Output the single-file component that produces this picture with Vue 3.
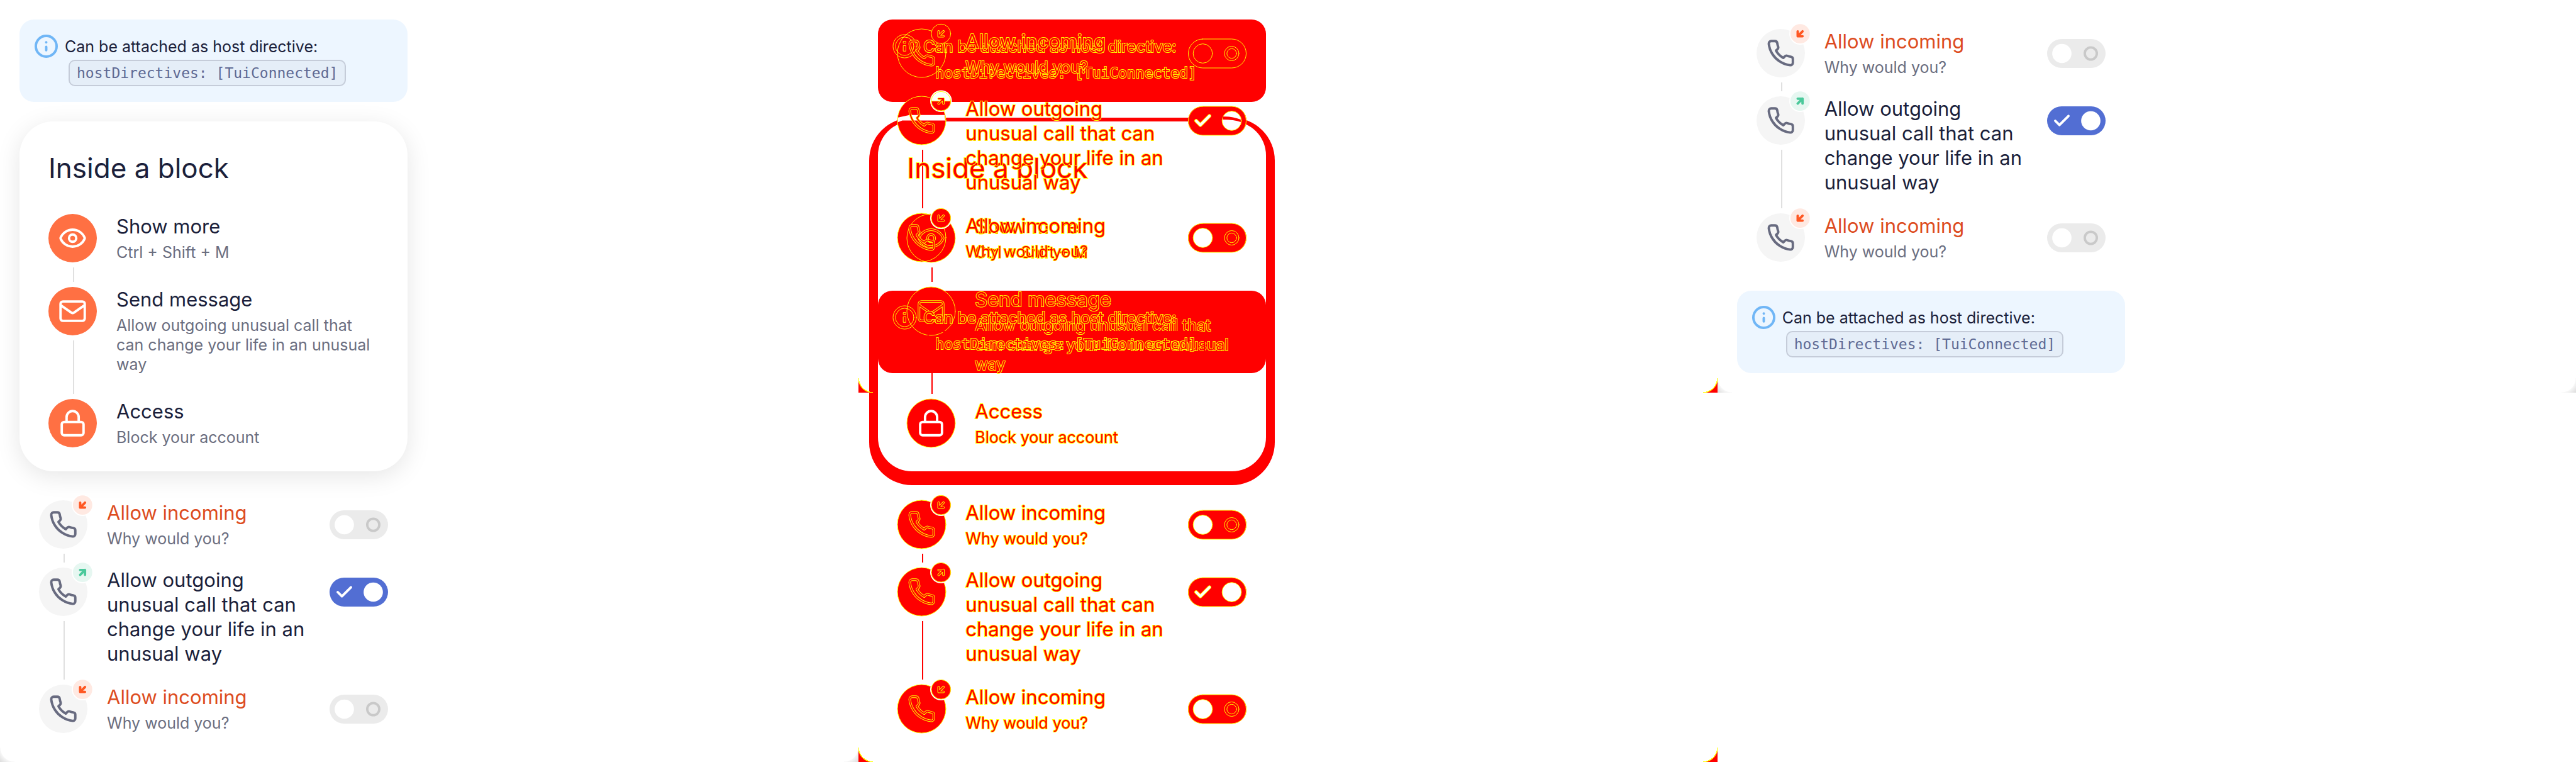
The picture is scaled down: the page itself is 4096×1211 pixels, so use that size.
<script setup>
const phone =
  'M22 16.92v3a2 2 0 0 1-2.18 2 19.79 19.79 0 0 1-8.63-3.07 19.5 19.5 0 0 1-6-6 19.79 19.79 0 0 1-3.07-8.67A2 2 0 0 1 4.11 2h3a2 2 0 0 1 2 1.72 12.84 12.84 0 0 0 .7 2.81 2 2 0 0 1-.45 2.11L8.09 9.91a16 16 0 0 0 6 6l1.27-1.27a2 2 0 0 1 2.11-.45 12.84 12.84 0 0 0 2.81.7A2 2 0 0 1 22 16.92z'
const eye =
  'M2.06 12.35a1 1 0 0 1 0-.7 10.75 10.75 0 0 1 19.88 0 1 1 0 0 1 0 .7 10.75 10.75 0 0 1-19.88 0M15 12a3 3 0 1 1-6 0a3 3 0 1 1 6 0z'
const mail =
  'M4 4h16a2 2 0 0 1 2 2v12a2 2 0 0 1-2 2H4a2 2 0 0 1-2-2V6a2 2 0 0 1 2-2zM22 7l-8.97 6.2a1.94 1.94 0 0 1-2.06 0L2 7'
const lock =
  'M5 11h14a2 2 0 0 1 2 2v7a2 2 0 0 1-2 2H5a2 2 0 0 1-2-2v-7a2 2 0 0 1 2-2zM7 11V7a5 5 0 0 1 10 0v4'

const arrowIn = 'M76 4L68 12M76 12H68V4'
const arrowOut = 'M68 12L76 4M68 4H76V12'

const actions = [
  { title: 'Show more', note: 'Ctrl + Shift + M', icon: eye },
  {
    title: 'Send message',
    note: 'Allow outgoing unusual call that can change your life in an unusual way',
    icon: mail,
  },
  { title: 'Access', note: 'Block your account', icon: lock, plain: true },
]

// `overlap` tells how a row meets the shapes of the other layer
const calls = (overlaps = []) =>
  [
    { title: 'Allow incoming', note: 'Why would you?', incoming: true },
    { title: 'Allow outgoing unusual call that can change your life in an unusual way', on: true },
    { title: 'Allow incoming', note: 'Why would you?', incoming: true },
  ].map((item, i) => ({
    ...item,
    icon: phone,
    badge: item.incoming ? arrowIn : arrowOut,
    overlap: overlaps[i] || '',
  }))

const before = [{ type: 'notice' }, { type: 'card', items: actions }, { type: 'list', items: calls() }]
const after = [{ type: 'list', items: calls() }, { type: 'notice' }]
const afterOverlaid = [{ type: 'list', items: calls(['solid', 'crossed']) }, { type: 'notice' }]

const panels = [
  { name: 'before', layers: [before] },
  { name: 'diff', diff: true, layers: [before, afterOverlaid] },
  { name: 'after', layers: [after] },
]
</script>

<template>
  <main class="page">
    <section v-for="panel in panels" :key="panel.name" class="panel" :class="{ diff: panel.diff }">
      <div v-for="(layer, l) in panel.layers" :key="l" class="layer">
        <template v-for="(block, b) in layer" :key="b">
          <aside v-if="block.type === 'notice'" class="notice">
            <svg class="info" viewBox="0 0 38 38">
              <template v-if="panel.diff">
                <circle class="edge" cx="19" cy="19" r="19" />
                <circle class="edge" cx="19" cy="19" r="15" />
                <path class="edge" d="M17 11h4v3h-4zM17 18h4v9h-4z" />
              </template>
              <template v-else>
                <circle cx="19" cy="19" r="17" />
                <path d="M19 12.4v.2M19 20v5.5" />
              </template>
            </svg>
            <div class="notice-text">
              <p>Can be attached as host directive:</p>
              <code>hostDirectives: [TuiConnected]</code>
            </div>
          </aside>

          <div v-else :class="block.type">
            <h2 v-if="block.type === 'card'">Inside a block</h2>
            <ul>
              <li v-for="(item, i) in block.items" :key="i" class="item">
                <div class="media">
                  <div class="avatar">
                    <svg viewBox="0 0 80 80">
                      <template v-if="panel.diff">
                        <path
                          v-if="item.overlap === 'crossed'"
                          class="white"
                          d="M1 35L20 31H78L79 40H8L0 43z"
                        />
                        <circle class="edge" cx="40" cy="40" r="40" />
                        <template v-if="item.badge">
                          <circle v-if="item.overlap !== 'solid'" class="white" cx="72" cy="8" r="18" />
                          <circle
                            class="edge"
                            :class="item.overlap === 'crossed' ? 'white' : 'red'"
                            cx="72"
                            cy="8"
                            r="16"
                          />
                          <path v-if="item.overlap === 'crossed'" class="edge red" d="M56 8h32a16 16 0 0 1-32 0" />
                          <path class="arrow halo" :d="item.badge" />
                          <path class="arrow core" :d="item.badge" />
                        </template>
                        <g v-if="item.plain" transform="translate(16 16) scale(2)">
                          <path class="icon plain" :d="item.icon" />
                        </g>
                        <g v-else transform="translate(16 16) scale(2)">
                          <path class="icon halo" :d="item.icon" />
                          <path class="icon core" :d="item.icon" />
                        </g>
                      </template>
                      <template v-else>
                        <g transform="translate(16 16) scale(2)">
                          <path class="icon" :d="item.icon" />
                        </g>
                        <g v-if="item.badge" :class="item.incoming ? 'in' : 'out'">
                          <circle class="white" cx="72" cy="8" r="18" />
                          <circle class="badge" cx="72" cy="8" r="16" />
                          <path class="arrow" :d="item.badge" />
                        </g>
                      </template>
                    </svg>
                  </div>
                  <span v-if="i < block.items.length - 1" class="line"></span>
                </div>

                <div class="body" :class="{ warn: item.incoming }">
                  <label v-if="block.type === 'list'" class="title" :for="`${panel.name}-${l}-${b}-${i}`">{{
                    item.title
                  }}</label>
                  <h3 v-else class="title">{{ item.title }}</h3>
                  <p v-if="item.note" class="note">{{ item.note }}</p>
                </div>

                <span v-if="block.type === 'list'" class="switch">
                  <input :id="`${panel.name}-${l}-${b}-${i}`" type="checkbox" role="switch" :checked="item.on" />
                  <svg viewBox="0 0 96 48">
                    <rect v-if="panel.diff" class="edge" x="0" y="0" width="96" height="48" rx="24" />
                    <circle
                      :class="[{ edge: panel.diff }, item.overlap === 'solid' ? 'red' : 'white']"
                      :cx="item.on ? 72 : 24"
                      cy="24"
                      r="16"
                    />
                    <path
                      v-if="item.overlap === 'crossed'"
                      class="red"
                      d="M57 17Q72 16 87 22L87 26Q76 22 57 22z"
                    />
                    <template v-if="item.on">
                      <path v-if="panel.diff" class="check halo" d="M13 24L20 31L35 16" />
                      <path class="check" d="M13 24L20 31L35 16" />
                    </template>
                    <template v-else-if="panel.diff">
                      <circle class="edge" cx="72" cy="24" r="12" />
                      <circle class="edge" cx="72" cy="24" r="8" />
                    </template>
                    <circle v-else class="ring" cx="72" cy="24" r="10" />
                  </svg>
                </span>
              </li>
            </ul>
          </div>
        </template>
      </div>
    </section>
  </main>
</template>

<style>
body {
  margin: 0;
  background: #fff;
}
</style>

<style scoped>
.page {
  display: flex;
  align-items: flex-start;
  font-family: 'Inter', 'Noto Sans', sans-serif;
  color: #1b1f3b;
}
.panel {
  flex: 1;
  min-width: 0;
  display: grid;
  overflow: hidden;
}
.layer {
  --corner: transparent 22px, #f6f6f6 23px, #dadada 33px;
  grid-area: 1 / 1;
  align-self: start;
  display: flex;
  flex-direction: column;
  gap: 31px;
  padding: 31px;
  background:
    radial-gradient(circle at 100% 0, var(--corner)) left bottom / 23px 23px no-repeat,
    radial-gradient(circle at 0 0, var(--corner)) right bottom / 23px 23px no-repeat;
}
.notice,
.card,
.list {
  box-sizing: border-box;
  width: 617px;
  max-width: 100%;
}
h2,
h3,
p,
ul {
  margin: 0;
  padding: 0;
  font-weight: 400;
}
ul {
  list-style: none;
}
svg {
  display: block;
  overflow: visible;
  fill: none;
  stroke-linecap: round;
  stroke-linejoin: round;
}

.notice {
  display: flex;
  gap: 11px;
  padding: 24px;
  border-radius: 23px;
  background: #edf6ff;
}
.info {
  flex: none;
  width: 37px;
  height: 37px;
  stroke: #70b6f6;
  stroke-width: 4;
}
.notice-text p {
  font-size: 25px;
  line-height: 39px;
}
.notice-text code {
  display: block;
  width: max-content;
  margin: 1px 0 1px 6px;
  padding: 0 11px;
  border: 2px solid #c5ccd9;
  border-radius: 10px;
  background: #e5eef8;
  color: #5f6a94;
  font: 23px/38px 'DejaVu Sans Mono', monospace;
}

.card {
  padding: 46px 46px 38px;
  border-radius: 54px;
  background: #fff;
  box-shadow: 0 8px 39px rgba(0, 0, 0, 0.1);
}
.card h2 {
  margin-bottom: 45px;
  font-size: 44px;
  line-height: 56px;
}
.list {
  padding: 15px 31px;
}

.item {
  display: flex;
  gap: 31px;
}
.media {
  display: flex;
  flex-direction: column;
}
.avatar {
  width: 77px;
  height: 77px;
  border-radius: 50%;
  background: #f5f5f5;
}
.card .avatar {
  background: #ff7043;
}
.line {
  flex: 1;
  width: 2px;
  margin: 8px 0 8px 39px;
  background: #e0e0e0;
}
.icon {
  stroke: #686b80;
  stroke-width: 2;
}
.card .icon {
  stroke: #fff;
}
.white {
  fill: #fff;
}
.red {
  fill: #f00;
}
.arrow {
  stroke-width: 4;
}
.in .badge {
  fill: #ffe9e2;
}
.in .arrow {
  stroke: #ff5722;
}
.out .badge {
  fill: #e6f7f1;
}
.out .arrow {
  stroke: #4ac99b;
}

.body {
  flex: 1;
  min-width: 0;
}
.card .item:not(:last-child) .body {
  padding-bottom: 39px;
}
.list .item:not(:last-child) .body {
  padding-bottom: 30px;
}
.title {
  display: block;
  font-size: 31px;
  line-height: 39px;
}
.warn .title {
  color: #dd4c1e;
}
.note {
  margin-top: 7px;
  color: #6b6e80;
  font-size: 25px;
  line-height: 31px;
}

.switch {
  display: grid;
  align-content: center;
  height: 77px;
}
.switch input,
.switch svg {
  grid-area: 1 / 1;
  width: 93px;
  height: 46px;
}
.switch input {
  appearance: none;
  margin: 0;
  border-radius: 23px;
  background: #ebebeb;
}
.switch input:checked {
  background: #526ed3;
}
.switch svg {
  pointer-events: none;
}
.ring {
  stroke: #c9c9c9;
  stroke-width: 4;
}
.check {
  stroke: #fff;
  stroke-width: 4;
}

.diff .layer {
  --corner: transparent 22px, #ff0 22px, #ff0 23px, #f00 24px;
}
.diff .notice,
.diff .avatar,
.diff .line,
.diff .switch input {
  background: #f00;
}
.diff .card {
  box-shadow: 0 8px 0 14px #f00;
}
.diff .notice-text code {
  border-color: #f00;
  background: none;
}
.diff h2,
.diff .title,
.diff .note,
.diff .notice-text p,
.diff .notice-text code {
  color: #f00;
  -webkit-text-stroke: 2px #ff0;
  paint-order: stroke fill;
}
.diff h2,
.diff .body,
.diff .notice-text,
.diff svg {
  position: relative;
  z-index: 1;
}
.diff .edge {
  stroke: #ff0;
  stroke-width: 1;
}
.diff .icon.halo {
  stroke: #ff0;
  stroke-width: 2;
}
.diff .icon.core {
  stroke: #f00;
  stroke-width: 1;
}
.diff .icon.plain {
  stroke: #fff;
}
.diff .arrow.halo {
  stroke: #ff0;
}
.diff .arrow.core {
  stroke: #f00;
  stroke-width: 2;
}
.diff .check.halo {
  stroke: #ff0;
  stroke-width: 6;
}
</style>
